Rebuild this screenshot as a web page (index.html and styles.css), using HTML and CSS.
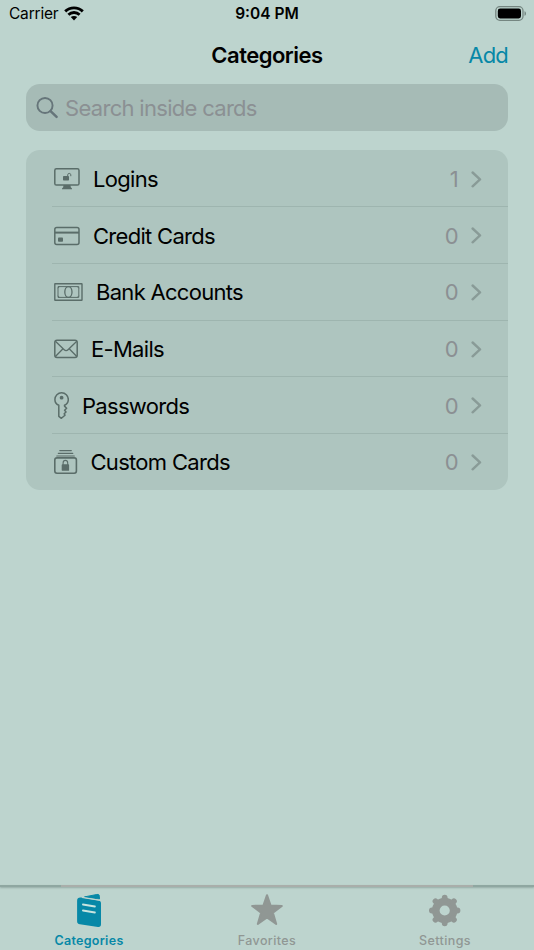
FILE: index.html
```html
<!DOCTYPE html>
<html lang="en">
<head>
<meta charset="utf-8">
<title>Categories</title>
<link rel="stylesheet" href="styles.css">
</head>
<body>
<div class="screen">
  <header class="status">
    <div class="carrier"><span>Carrier</span>
      <svg class="wifi" width="20" height="15" viewBox="0 0 20 15"><g fill="none" stroke="#000" stroke-width="2.9"><path d="M1.2 5.4C6.1.7 13.9.7 18.8 5.4"/><path d="M4.4 8.7C7.5 5.8 12.5 5.8 15.6 8.7"/></g><path d="M6.8 11.1C8.5 9.5 11.5 9.5 13.2 11.1L10 14.4Z"/></svg>
    </div>
    <div class="time">9:04 PM</div>
    <svg class="battery" width="32" height="15" viewBox="0 0 32 15"><rect x=".8" y=".7" width="27.2" height="13.6" rx="4" fill="none" stroke="#758681" stroke-width="1.3"/><rect x="2.8" y="2.6" width="23.2" height="9.8" rx="2.3"/><path d="M29.5 5.2C31.5 5.8 31.5 9.2 29.5 9.8Z" fill="#758681"/></svg>
  </header>
  <nav class="navbar"><span></span><h1>Categories</h1><a class="add">Add</a></nav>
  <div class="search">
    <svg width="23" height="24" viewBox="0 0 24 24" fill="none" stroke="#66757a"><circle cx="9.4" cy="9.4" r="7.9" stroke-width="2"/><path d="M15.2 15.2L21.5 21.3" stroke-width="2.6" stroke-linecap="round"/></svg>
    <span>Search inside cards</span>
  </div>
  <main class="list">
    <div class="row">
      <svg class="icon logins" width="26" height="22" viewBox="0 0 26 22"><rect x=".8" y=".8" width="24.2" height="16.2" rx="1.6" fill="none" stroke="#5a6d69" stroke-width="1.5"/><path d="M9.5 17H16.4L16.8 19.2L18 20.5V21.2H8V20.5L9.2 19.2Z" fill="#5a6d69"/><rect x="9" y="8" width="6" height="4.5" rx=".7" fill="#5a6d69"/><path d="M13.7 8V6.8C13.7 4.9 16.8 4.9 16.8 6.8V8.2" fill="none" stroke="#5a6d69" stroke-width="1"/></svg>
      <span class="label">Logins</span><span class="count">1</span>
      <svg class="chevron" width="11" height="17" viewBox="0 0 11 17"><path d="M1.6 1.5L9 8.4L1.6 15.3"/></svg>
    </div>
    <div class="row">
      <svg class="icon credit" width="26" height="20" viewBox="0 0 26 20"><rect x=".8" y="1.6" width="24.2" height="17" rx="2" fill="none" stroke="#5a6d69" stroke-width="1.5"/><path d="M1 6.6H25" stroke="#5a6d69" stroke-width="2"/><rect x="4" y="11.5" width="5" height="4.3" rx=".8" fill="#5a6d69"/></svg>
      <span class="label">Credit Cards</span><span class="count">0</span>
      <svg class="chevron" width="11" height="17" viewBox="0 0 11 17"><path d="M1.6 1.5L9 8.4L1.6 15.3"/></svg>
    </div>
    <div class="row">
      <svg class="icon bank" width="29" height="20" viewBox="0 0 29 20" fill="none" stroke="#5a6d69"><rect x=".8" y="1.7" width="27.2" height="16.6" rx=".4" stroke-width="1.4"/><path d="M4 4.6H24.8V15.4H4ZM4 6.2L5.4 4.6M24.8 6.2L23.4 4.6M4 13.8L5.4 15.4M24.8 13.8L23.4 15.4" stroke-width="1"/><ellipse cx="14.4" cy="10" rx="3.6" ry="5.4" stroke-width="1.3"/></svg>
      <span class="label">Bank Accounts</span><span class="count">0</span>
      <svg class="chevron" width="11" height="17" viewBox="0 0 11 17"><path d="M1.6 1.5L9 8.4L1.6 15.3"/></svg>
    </div>
    <div class="row">
      <svg class="icon mail" width="24" height="20" viewBox="0 0 24 20" fill="none" stroke="#5a6d69" stroke-width="1.3"><rect x=".8" y="1.2" width="22.4" height="17.2" rx="2.2" stroke-width="1.5"/><path d="M1.4 2.2L10.2 10.8C11.4 12 12.8 12 14 10.8L22.8 2.2M1.4 17.5L9 9.8M22.8 17.5L15.2 9.8"/></svg>
      <span class="label">E-Mails</span><span class="count">0</span>
      <svg class="chevron" width="11" height="17" viewBox="0 0 11 17"><path d="M1.6 1.5L9 8.4L1.6 15.3"/></svg>
    </div>
    <div class="row">
      <svg class="icon key" width="15" height="28" viewBox="0 0 15 28"><path d="M4.8 13.3C2.4 12.3.9 10.1.9 7.5A6.7 6.7 0 0 1 14.3 7.5C14.3 10 12.8 12.2 10.5 13.2V14.1L12.6 16.2L10.6 18.3L12 20L10.2 21.8L11 23.2L7.4 26.3L4.8 24.3Z" fill="none" stroke="#5a6d69" stroke-width="1.5" stroke-linejoin="round"/><circle cx="7.6" cy="5.7" r="1.9" fill="#5a6d69"/></svg>
      <span class="label">Passwords</span><span class="count">0</span>
      <svg class="chevron" width="11" height="17" viewBox="0 0 11 17"><path d="M1.6 1.5L9 8.4L1.6 15.3"/></svg>
    </div>
    <div class="row">
      <svg class="icon custom" width="23.5" height="26" viewBox="0 0 23.5 26" fill="none" stroke="#5a6d69"><path d="M5.8 1.6H17.3M4.3 4.3H18.8M2.8 7H20.3" stroke-width="1.2" stroke-linecap="round"/><rect x=".8" y="8.9" width="21.6" height="15.4" rx="2.2" stroke-width="1.6"/><rect x="7.7" y="15.2" width="7.4" height="6.6" rx=".9" fill="#5a6d69" stroke="none"/><path d="M9.1 16V13.9C9.1 10.5 13.7 10.5 13.7 13.9V16" stroke-width="1.1"/></svg>
      <span class="label">Custom Cards</span><span class="count">0</span>
      <svg class="chevron" width="11" height="17" viewBox="0 0 11 17"><path d="M1.6 1.5L9 8.4L1.6 15.3"/></svg>
    </div>
  </main>
  <footer class="tabs">
    <div class="tab active">
      <svg width="34" height="36" viewBox="0 0 34 36"><g transform="translate(4 .3)"><path d="M8.5 4.6L20.8 2.2C22.8 1.8 23.4 2.6 23.4 4.4V6.8Z" fill="currentColor" stroke="currentColor" stroke-linejoin="round"/><path d="M5.2 5.3L22.6 8.2C24.3 8.5 25 9.4 25 10.9V31.9C25 33.9 23.9 34.9 22 34.6L3.9 31.9C2 31.6 1.1 30.8 1.1 28.9V8.4C1.1 6.2 2.7 4.9 5.2 5.3Z" fill="currentColor"/><path d="M6 5.1L24.5 8" stroke="#bdd4ce" stroke-width="1.2"/><path d="M6.9 12.2L18.9 14.2M6.9 18.2L18.9 20.2" stroke="#c9e4df" stroke-width="1.8" stroke-linecap="round"/></g></svg>
      <span>Categories</span>
    </div>
    <div class="tab">
      <svg width="34" height="36" viewBox="0 0 34 36"><path d="M17 3.2L20.6 13.6L31.8 13.9L22.9 20.7L26.2 32L17 25.5L7.8 32L11.1 20.7L2.2 13.9L13.4 13.6Z" fill="currentColor" stroke="currentColor" stroke-width="2" stroke-linejoin="round"/></svg>
      <span>Favorites</span>
    </div>
    <div class="tab">
      <svg width="34" height="36" viewBox="0 0 34 36"><g transform="translate(16.7 18.5)" stroke="currentColor" fill="none"><circle r="8.9" stroke-width="7.6"/><path d="M0-11V-12.8M0 11V12.8M-11 0H-12.8M11 0H12.8M8-8L9.2-9.2M-8-8L-9.2-9.2M8 8L9.2 9.2M-8 8L-9.2 9.2" stroke-width="5.8" stroke-linecap="round"/></g></svg>
      <span>Settings</span>
    </div>
  </footer>
</div>
</body>
</html>
```
FILE: styles.css
```css
* { box-sizing: border-box; }
body { margin: 0; background: #bdd4ce; color: #000; font-family: Inter, sans-serif; }
svg { display: block; flex: none; }
.screen { width: 534px; height: 950px; display: flex; flex-direction: column; overflow: hidden; }
.status { height: 28px; padding: 0 7px 2px 9px; display: grid; grid-template-columns: 1fr auto 1fr; align-items: center; font-size: 15.5px; }
.carrier { display: flex; align-items: center; gap: 6px; letter-spacing: -.2px; }
.carrier span, .time { padding-top: 1px; }
.time { font-weight: 600; margin-right: 2px; }
.battery { justify-self: end; }
.navbar { height: 56px; padding: 0 26px 2px; display: grid; grid-template-columns: 1fr auto 1fr; align-items: center; }
.navbar h1 { margin: 0; font-size: 22px; font-weight: 600; letter-spacing: -.5px; }
.add { justify-self: end; color: #0788a7; font-size: 22px; letter-spacing: -.8px; }
.search { height: 47px; margin: 0 26px; padding: 0 10px; border-radius: 14px; background: #a6bbb6; color: #8b9093; display: flex; align-items: center; gap: 6px; font-size: 22px; letter-spacing: -.7px; }
.list { height: 340px; margin: 19px 26px 0; border-radius: 14px; background: #aec5bf; display: grid; grid-template-rows: repeat(6, 1fr); }
.row { position: relative; display: flex; align-items: center; padding: 1.4px 26px 0 28px; font-size: 22px; letter-spacing: -.7px; }
.row + .row::before { content: ""; position: absolute; top: -.5px; left: 26px; right: 0; height: 1px; background: #9eb5af; }
.label { margin-left: 13px; }
.count { margin-left: auto; margin-right: 13px; color: #8b9093; }
.chevron { fill: none; stroke: #899b97; stroke-width: 2.4; stroke-linecap: round; stroke-linejoin: round; }
.tabs { margin-top: auto; height: 66px; position: relative; display: grid; grid-template-columns: repeat(3, 178px); padding-top: 8px; }
.tabs::before { content: ""; position: absolute; top: 1px; left: 0; right: 0; height: 2px; background: linear-gradient(90deg, #8fa7a1 61px, #a9aeaa 61px, #a9aeaa 473px, #8fa7a1 473px); box-shadow: 0 1px 2px #93aaa4; }
.tab { color: #909794; display: flex; flex-direction: column; align-items: center; gap: 4px; font-size: 12.5px; line-height: 18px; font-weight: 500; letter-spacing: .4px; }
.active { color: #0788a7; font-weight: 600; letter-spacing: .3px; }
```
